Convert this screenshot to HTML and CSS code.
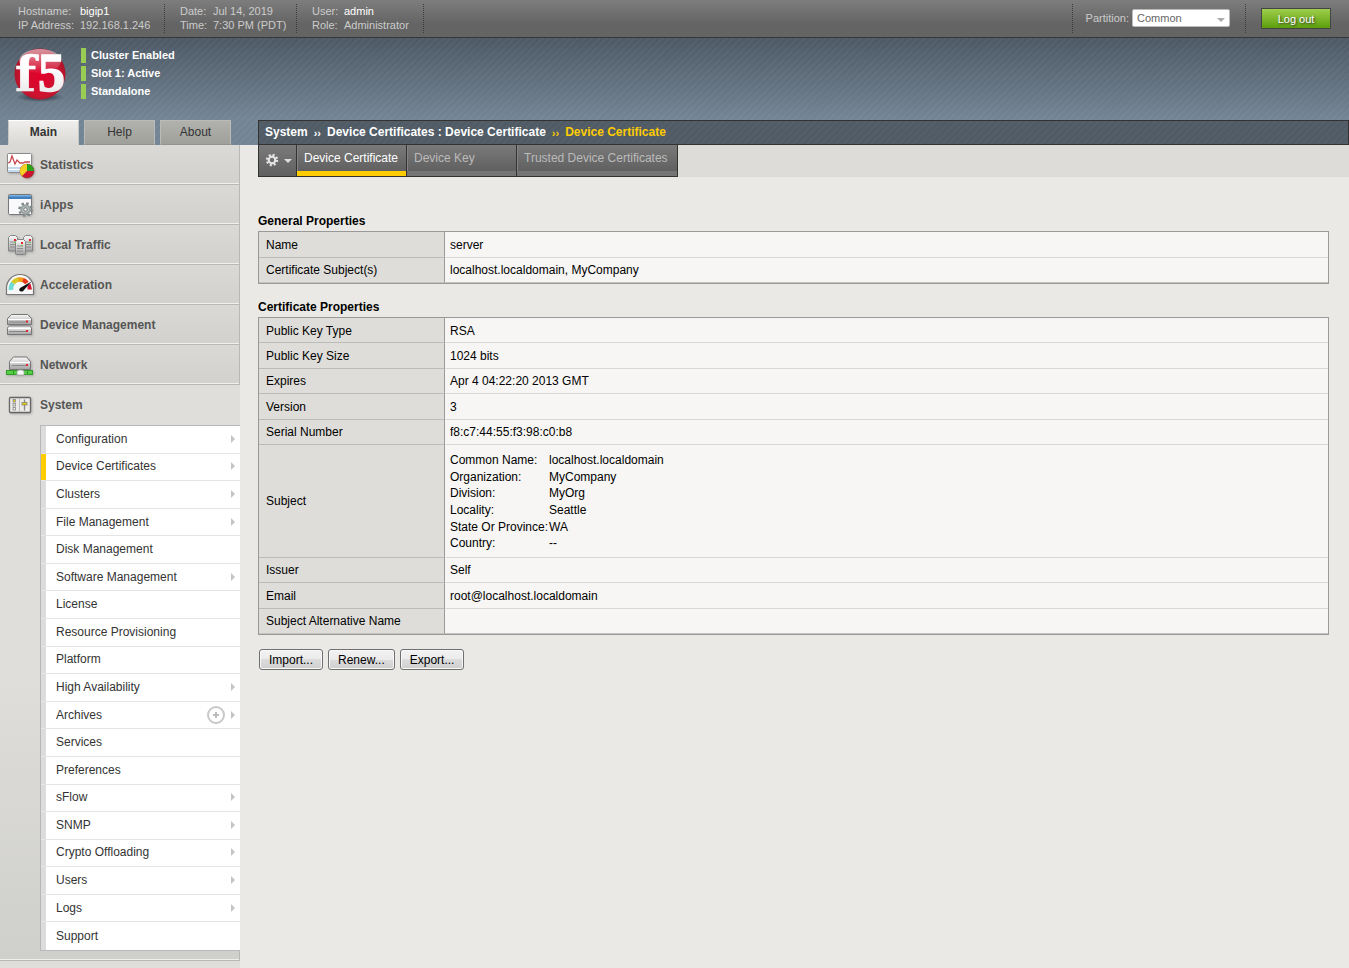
FILE: index.html
```html
<!DOCTYPE html>
<html lang="en">
<head>
<meta charset="utf-8">
<title>Device Certificate</title>
<link rel="stylesheet" href="styles.css">
</head>
<body>
<header class="topbar">
  <dl class="info host">
    <dt>Hostname:</dt><dd class="strong">bigip1</dd>
    <dt>IP Address:</dt><dd>192.168.1.246</dd>
  </dl>
  <dl class="info date">
    <dt>Date:</dt><dd>Jul 14, 2019</dd>
    <dt>Time:</dt><dd>7:30 PM (PDT)</dd>
  </dl>
  <dl class="info user">
    <dt>User:</dt><dd class="strong">admin</dd>
    <dt>Role:</dt><dd>Administrator</dd>
  </dl>
  <div class="partition">
    <label for="partition">Partition:</label>
    <span class="select"><select id="partition"><option>Common</option></select></span>
  </div>
  <button class="logout" type="button">Log out</button>
</header>

<div class="banner">
  <div class="brand">
    <svg class="logo" viewBox="0 0 54 56" role="img" aria-label="f5">
      <defs>
        <radialGradient id="ball" cx="50%" cy="55%" r="55%">
          <stop offset="0" stop-color="#e2002b"/><stop offset=".7" stop-color="#cc1430"/><stop offset="1" stop-color="#a01427"/>
        </radialGradient>
        <linearGradient id="gloss" x1="0" y1="0" x2="0" y2="1">
          <stop offset="0" stop-color="#fff" stop-opacity=".55"/><stop offset="1" stop-color="#fff" stop-opacity=".03"/>
        </linearGradient>
        <radialGradient id="shade">
          <stop offset="0" stop-color="#1c242c" stop-opacity=".9"/><stop offset="1" stop-color="#1c242c" stop-opacity="0"/>
        </radialGradient>
        <linearGradient id="letter" x1="0" y1="0" x2="0" y2="1">
          <stop offset=".4" stop-color="#fff"/><stop offset="1" stop-color="#e2e2e4"/>
        </linearGradient>
      </defs>
      <ellipse cx="27" cy="50" rx="24" ry="5" fill="url(#shade)"/>
      <circle cx="27" cy="27" r="25.500" fill="url(#ball)"/>
      <ellipse cx="27" cy="14" rx="21" ry="12" fill="url(#gloss)"/>
      <g font-weight="bold" fill="url(#letter)" stroke="url(#letter)">
        <text x="2" y="44" font-family="DejaVu Serif, serif" font-size="49" stroke-width=".5">f</text>
        <text x="25" y="44" font-family="Liberation Serif, serif" font-size="54" stroke-width="1.500">5</text>
      </g>
    </svg>
    <ul class="status">
      <li>Cluster Enabled</li>
      <li>Slot 1: Active</li>
      <li>Standalone</li>
    </ul>
  </div>
  <div class="heads">
    <nav class="side-tabs" aria-label="Panels">
      <a class="side-tab current" href="#">Main</a>
      <a class="side-tab" href="#">Help</a>
      <a class="side-tab" href="#">About</a>
    </nav>
    <div class="crumbs">
      <span>System</span><span class="sep">››</span><span>Device Certificates : Device Certificate</span><span class="sep here">››</span><span class="here">Device Certificate</span>
    </div>
  </div>
</div>

<div class="body">
  <nav class="sidebar" aria-label="Main">
    <a class="section" href="#">
      <svg class="icon" viewBox="0 0 30 30">
        <rect x="2.500" y="3.500" width="24" height="19" rx="1" fill="#fff" stroke="#8b8b8b"/>
        <path d="M3 17h23v2H3zM3 20h23v2H3z" fill="#c5daed"/>
        <path d="M3 13l2-1 2-6 3 8 2-4 3 3h3l2-1h5" fill="none" stroke="#c8464f" stroke-width="1.300"/>
        <circle cx="22" cy="21" r="7" fill="#cc1430" stroke="#8a3020" stroke-width=".6"/>
        <path d="M22 21v-7a7 7 0 0 1 7 7z" fill="#26a51c"/>
        <path d="M22 21v-7a7 7 0 0 0-5 12z" fill="#f3cf25"/>
      </svg>Statistics</a>
    <a class="section" href="#">
      <svg class="icon" viewBox="0 0 30 30">
        <rect x="3.500" y="4.500" width="23" height="20" rx="1" fill="#f9f9fb" stroke="#777"/>
        <path d="M4 5h22v4H4z" fill="#3f7fbd"/><path d="M4 5h22v1.500H4z" fill="#78b1e4"/>
        <circle cx="20.500" cy="19.500" r="6" fill="none" stroke="#7d8787" stroke-width="2.600" stroke-dasharray="2.360 2.352"/>
        <circle cx="20.500" cy="19.500" r="4.300" fill="#b9c0c0" stroke="#98a1a1" stroke-width="2"/>
        <circle cx="20.500" cy="19.500" r="1.800" fill="#e4e6e6" stroke="#666" stroke-width=".8"/>
      </svg>iApps</a>
    <a class="section" href="#">
      <svg class="icon" viewBox="0 0 30 30">
        <defs><linearGradient id="metal" x1="0" y1="0" x2="0" y2="1"><stop offset="0" stop-color="#fafafa"/><stop offset="1" stop-color="#a3a3a3"/></linearGradient></defs>
        <g fill="url(#metal)" stroke="#858585">
          <path d="M3.500 21V7.500l2-2h5l2 2V21zM18.500 21V7.500l2-2h5l2 2V21z"/>
          <path d="M10.500 24V11.500l2-2h6l2 2V24l-1 .5h-8z"/>
        </g>
        <path d="M5 12h5M5 14.500h5M5 17h5M21 12h5M21 14.500h5M21 17h5M12 16h6M12 18.500h6M12 21h6" stroke="#777" stroke-width=".7"/>
        <path d="M9 9h2v2H9zM24 9h2v2h-2zM16 12h2v2h-2z" fill="#e42433"/>
        <path d="M9 12h2v1H9zM24 12h2v1h-2zM16 15h2v1h-2z" fill="#70c447"/>
      </svg>Local Traffic</a>
    <a class="section" href="#">
      <svg class="icon" viewBox="0 0 30 30">
        <path d="M1.500 24.500V18a13.500 13.500 0 0 1 27 0v6.500z" fill="#f8f8f8" stroke="#777" stroke-width="1.200" stroke-linejoin="round"/>
        <g fill="none" stroke-width="4.500">
          <path d="M6 20a9 9 0 0 1 2-7" stroke="#6edbd5"/><path d="M8 13a9 9 0 0 1 6-3.500" stroke="#d9c925"/>
          <path d="M13.500 9.500a9 9 0 0 1 5 .8" stroke="#f19a18"/><path d="M18 10a9 9 0 0 1 4 3" stroke="#e63618"/>
        </g>
        <path d="M22.500 15.500l3-2 1.500 6h-4.500z" fill="#d4142c"/>
        <path d="M26.500 11.500L15 18q-2 3 1 3.500 2 .500 3-1.500z" fill="#111"/>
      </svg>Acceleration</a>
    <a class="section" href="#">
      <svg class="icon" viewBox="0 0 30 30">
        <g fill="url(#metal)" stroke="#777">
          <path d="M2.500 8.500l4-4h16l4 4v6h-24z"/><path d="M2.500 18.500v-1l2-1.500h20l2 1.500v7h-24z"/>
        </g>
        <path d="M3 9.500h23M3 18.500h23" stroke="#fff"/><path d="M4 12h19M4 21.500h19" stroke="#858585"/>
        <path d="M21 10.500h2v2h-2zM21 20h2v2h-2z" fill="#e42433"/>
      </svg>Device Management</a>
    <a class="section" href="#">
      <svg class="icon" viewBox="0 0 30 30">
        <path d="M4.500 11.500l4-4.500h13l4 4.500v8h-21z" fill="url(#metal)" stroke="#777"/>
        <path d="M5 12.500h20" stroke="#fff"/><path d="M7 15.500h15" stroke="#888"/>
        <path d="M21 14h2v2h-2z" fill="#e42433"/>
        <rect x="1.500" y="20.500" width="26" height="4" fill="#54d045" stroke="#349c2c"/>
        <path d="M12 25v-4l2-1h3l2 1v4z" fill="#f7f7f7" stroke="#999" stroke-width=".7"/>
        <path d="M8.500 21v3M22.500 21v3" stroke="#319224"/>
      </svg>Network</a>
    <div class="open">
      <a class="section plain" href="#">
        <svg class="icon" viewBox="0 -3 30 30">
          <rect x="4.500" y="4.500" width="21" height="15" rx="1" fill="#ecebe9" stroke="#666" stroke-width="1.300"/>
          <path d="M14.500 5v14" stroke="#bbb"/>
          <g fill="none" stroke="#888" stroke-width=".8"><rect x="8" y="6.500" width="2.500" height="2.500" fill="#e9cf16"/><rect x="8" y="10.500" width="2.500" height="2.500"/><rect x="8" y="14.500" width="2.500" height="2.500"/></g>
          <path d="M19.500 6.500v11" stroke="#888" stroke-width="1.300"/>
          <rect x="17" y="9.500" width="5" height="2.500" fill="#e9cf16" stroke="#777" stroke-width=".7"/>
        </svg>System</a>
      <ul class="submenu">
        <li><a class="more" href="#">Configuration</a></li>
        <li><a class="more active" href="#">Device Certificates</a></li>
        <li><a class="more" href="#">Clusters</a></li>
        <li><a class="more" href="#">File Management</a></li>
        <li><a href="#">Disk Management</a></li>
        <li><a class="more" href="#">Software Management</a></li>
        <li><a href="#">License</a></li>
        <li><a href="#">Resource Provisioning</a></li>
        <li><a href="#">Platform</a></li>
        <li><a class="more" href="#">High Availability</a></li>
        <li><a class="more with-plus" href="#">Archives
          <svg class="plus" viewBox="0 0 18 18"><circle cx="9" cy="9" r="8" fill="none" stroke="#c8c8c8" stroke-width="2"/><path d="M9 6v6M6 9h6" stroke="#bcbcbc" stroke-width="2"/></svg></a></li>
        <li><a href="#">Services</a></li>
        <li><a href="#">Preferences</a></li>
        <li><a class="more" href="#">sFlow</a></li>
        <li><a class="more" href="#">SNMP</a></li>
        <li><a class="more" href="#">Crypto Offloading</a></li>
        <li><a class="more" href="#">Users</a></li>
        <li><a class="more" href="#">Logs</a></li>
        <li><a href="#">Support</a></li>
      </ul>
    </div>
  </nav>

  <main>
    <div class="tabstrip">
      <div class="tabs">
        <button class="gear" type="button" aria-label="Options">
          <svg class="cog" viewBox="0 0 14 14"><circle cx="7" cy="7" r="5" fill="none" stroke="#e4e4e4" stroke-width="2.400" stroke-dasharray="1.960 1.967"/><circle cx="7" cy="7" r="3.300" fill="none" stroke="#e4e4e4" stroke-width="2.200"/></svg>
        </button>
        <a class="tab current" href="#">Device Certificate</a>
        <a class="tab" href="#">Device Key</a>
        <a class="tab wide" href="#">Trusted Device Certificates</a>
      </div>
    </div>
    <div class="panel">
      <h2>General Properties</h2>
      <table class="props general">
        <tr><th scope="row">Name</th><td>server</td></tr>
        <tr><th scope="row">Certificate Subject(s)</th><td>localhost.localdomain, MyCompany</td></tr>
      </table>
      <h2>Certificate Properties</h2>
      <table class="props long">
        <tr><th scope="row">Public Key Type</th><td>RSA</td></tr>
        <tr><th scope="row">Public Key Size</th><td>1024 bits</td></tr>
        <tr><th scope="row">Expires</th><td>Apr 4 04:22:20 2013 GMT</td></tr>
        <tr><th scope="row">Version</th><td>3</td></tr>
        <tr><th scope="row">Serial Number</th><td>f8:c7:44:55:f3:98:c0:b8</td></tr>
        <tr><th scope="row">Subject</th><td>
          <dl class="subject">
            <dt>Common Name:</dt><dd>localhost.localdomain</dd>
            <dt>Organization:</dt><dd>MyCompany</dd>
            <dt>Division:</dt><dd>MyOrg</dd>
            <dt>Locality:</dt><dd>Seattle</dd>
            <dt>State Or Province:</dt><dd>WA</dd>
            <dt>Country:</dt><dd>--</dd>
          </dl></td></tr>
        <tr><th scope="row">Issuer</th><td>Self</td></tr>
        <tr><th scope="row">Email</th><td>root@localhost.localdomain</td></tr>
        <tr><th scope="row">Subject Alternative Name</th><td></td></tr>
      </table>
      <div class="actions">
        <button type="button">Import...</button>
        <button type="button">Renew...</button>
        <button type="button">Export...</button>
      </div>
    </div>
  </main>
</div>
</body>
</html>
```
FILE: styles.css
```css
* { box-sizing: border-box; }
body {
  margin: 0;
  min-height: 100vh;
  display: flex;
  flex-direction: column;
  background: #eae9e5;
  color: #000;
  font: 12px/16px "Liberation Sans", Arial, sans-serif;
}
a { color: inherit; text-decoration: none; }
dl, dd, ul, h2 { margin: 0; padding: 0; }
ul { list-style: none; }
button, select { font: inherit; }

/* top bar */
.topbar {
  display: flex;
  align-items: flex-start;
  height: 38px;
  padding: 4px 18px 0 3px;
  background: linear-gradient(#7d7d7d, #646464 65%, #646464);
  border-bottom: 1px solid #383838;
  color: #ccc;
  font-size: 11px;
  line-height: 14px;
}
.info {
  display: grid;
  align-content: start;
  height: 29px;
  padding-left: 15px;
  border-right: 1px dotted #3c3c3c;
  white-space: nowrap;
}
.host { width: 162px; grid-template-columns: 62px 1fr; }
.date { width: 132px; grid-template-columns: 33px 1fr; }
.user { width: 127px; grid-template-columns: 32px 1fr; }
.strong { color: #fff; }
.partition {
  display: flex;
  align-items: center;
  gap: 3px;
  height: 29px;
  margin-left: auto;
  padding: 0 15px 1px 13px;
  border: 1px dotted #3c3c3c;
  border-width: 0 1px;
}
.select { position: relative; }
.select::after {
  content: "";
  position: absolute;
  right: 5px;
  bottom: 5px;
  border: 4px solid transparent;
  border-top-color: #aaa;
  border-bottom: 0;
  pointer-events: none;
}
.select select {
  appearance: none;
  display: block;
  width: 98px;
  height: 18px;
  padding: 0 4px 1px;
  border: 1px solid #bbb;
  border-radius: 2px;
  background: #fff;
  color: #666;
}
.logout {
  width: 70px;
  height: 21px;
  margin: 4px 0 0 15px;
  padding: 0;
  border: 1px solid #444;
  background: linear-gradient(#9fce4b, #5c9f0c);
  color: #fff;
  text-shadow: 1px 1px 2px #333;
}

/* banner */
.banner {
  background:
    repeating-linear-gradient(135deg, transparent 0 3px, rgba(255, 255, 255, .03) 3px 5px),
    linear-gradient(#4d5965, #738494 75%, #738494);
}
.brand { display: flex; height: 82px; padding: 9px 13px 0; }
.logo { width: 54px; height: 56px; margin-right: 14px; overflow: visible; }
.status { display: flex; flex-direction: column; gap: 3px; padding-top: 1px; }
.status li {
  padding-left: 5px;
  border-left: 5px solid #98cc52;
  color: #fff;
  font-size: 11px;
  font-weight: bold;
  line-height: 15px;
}
.heads { display: flex; }
.side-tabs { display: flex; flex: none; gap: 5px; width: 258px; padding-left: 8px; }
.side-tab {
  width: 71px;
  height: 25px;
  border: 1px solid #babab6;
  border-bottom-color: #92938e;
  background: linear-gradient(#b1b2ad, #9fa09a);
  color: #333;
  line-height: 22px;
  text-align: center;
}
.side-tab.current {
  border-color: #fff #c6c6c2 #dad9d5;
  background: linear-gradient(#efeeec, #dad9d5);
  font-weight: bold;
}
.crumbs {
  display: flex;
  flex: 1;
  gap: 6px;
  height: 25px;
  padding-left: 6px;
  border: 1px solid #333;
  background: repeating-linear-gradient(135deg, #505b66 0 3px, #535f69 3px 5px);
  color: #fff;
  font-weight: bold;
  line-height: 22px;
}
.sep { font-size: 11px; line-height: 24px; }
.here { color: #fc0; }

/* sidebar */
.body { display: grid; grid-template-columns: 240px 1fr; flex: 1; }
.sidebar { background: #dfdeda; }
.section {
  display: flex;
  align-items: center;
  gap: 5px;
  height: 40px;
  padding: 0 5px;
  border-right: 1px solid #b8b8b8;
  border-bottom: 1px solid #b8b8b8;
  background: linear-gradient(#dad9d5, #d2d1cd);
  box-shadow: inset 0 -1px #efefed;
  color: #555;
  font-weight: bold;
}
.section.plain { border-color: transparent; background: none; box-shadow: none; }
.icon { width: 30px; height: 30px; filter: drop-shadow(1px 1px 1px #aaa); }
.open {
  border-bottom: 1px solid #b8b8b8;
  background: linear-gradient(#dfdeda 50%, #cfcfcb);
}
.open::after {
  content: "";
  display: block;
  height: 9px;
  border-right: 1px solid #b8b8b8;
  box-shadow: inset 0 -1px #efefed;
}
.submenu {
  display: grid;
  grid-auto-rows: 1fr;
  min-height: 526px;
  margin-left: 40px;
  border: 1px solid #b8b8b8;
  border-right: 0;
  background: #fff;
}
.submenu a {
  display: flex;
  align-items: center;
  height: 100%;
  padding: 0 5px 1px 10px;
  border-left: 5px solid #dcdcdc;
  color: #333;
}
.submenu li { border-bottom: 1px solid #e4e4e4; }
.submenu li:last-child { border-bottom: 0; }
.submenu .active { border-left-color: #fc0; }
.more::after {
  content: "";
  margin-left: auto;
  border: 4px solid transparent;
  border-left-color: #c4c4c4;
  border-right: 0;
}
.plus { width: 18px; height: 18px; margin: 0 6px 0 auto; }
.with-plus::after { margin-left: 0; }

/* content */
.tabstrip { margin-left: 18px; background: #dddcd8; }
.tabs {
  display: inline-flex;
  vertical-align: top;
  height: 32px;
  border: 1px solid #333;
  border-width: 0 0 1px 1px;
}
.gear {
  display: flex;
  align-items: center;
  width: 38px;
  padding: 0 4px 2px 6px;
  border: 0;
  border-right: 1px solid #333;
  background: linear-gradient(#7a7a7a, #606060);
}
.cog { width: 14px; height: 14px; }
.gear::after {
  content: "";
  margin: 3px 0 0 5px;
  border: 4px solid transparent;
  border-top-color: #ddd;
  border-bottom: 0;
}
.tab {
  position: relative;
  min-width: 110px;
  padding: 0 6px 0 7px;
  border-bottom: 5px solid #757575;
  background: linear-gradient(#7a7a7a, #606060);
  box-shadow: inset 1px 0 #848484;
  color: #bbb;
  line-height: 26px;
}
.tab.wide { min-width: 161px; }
.tab.current { border-bottom-color: #fc0; color: #fff; }
.tab::after {
  content: "";
  position: absolute;
  top: 0;
  right: 0;
  width: 1px;
  height: 31px;
  background: #333;
}
.panel { padding: 36px 20px 20px 18px; }
h2 { font-size: 12px; line-height: 16px; margin-bottom: 2px; }
.props {
  width: 100%;
  border-collapse: separate;
  border-spacing: 0;
  border: 1px solid #999;
  background: #f7f6f4;
}
.props th, .props td {
  height: 25px;
  padding: 1px 5px 0;
  border-bottom: 1px solid #d8d8d6;
  text-align: left;
}
.props th {
  width: 186px;
  padding-left: 7px;
  border-right: 1px solid #999;
  border-bottom-color: #bbb;
  background: #deddd9;
  font-weight: normal;
}
.props tr:last-child > * { border-bottom-color: #c4c4c2; }
.general { height: 53px; margin-bottom: 15px; }
.long { height: 318px; margin-bottom: 14px; }
.subject {
  display: grid;
  grid-template-columns: 99px 1fr;
  grid-auto-rows: 1fr;
  min-height: 100px;
  margin: 5px 0 4px;
}
.actions { display: flex; gap: 5px; padding-left: 1px; }
.actions button {
  height: 21px;
  padding: 0 9px;
  border: 1px solid #707070;
  border-radius: 3px;
  background: linear-gradient(#f2f2f2, #ebebeb 50%, #dcdcdc 50%, #cfcfcf);
  box-shadow: inset 0 0 0 1px #f8f8f8;
  color: #000;
}
```
